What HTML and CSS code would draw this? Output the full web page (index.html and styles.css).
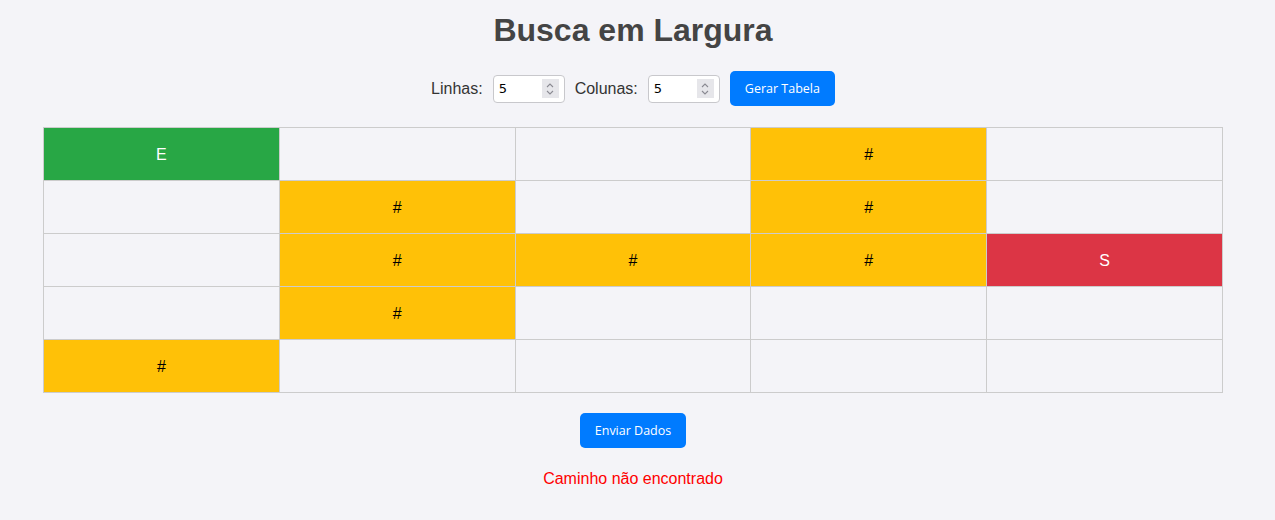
FILE: index.html
```html
<!DOCTYPE html>
<html lang="pt">
<head>
<meta charset="utf-8">
<title>Busca em Largura</title>
<link rel="stylesheet" href="styles.css">
</head>
<body>
<div class="page">
  <h1 class="title">Busca em Largura</h1>
  <div class="controls">
    <label class="lbl">Linhas:</label>
    <div class="numbox">
      <input class="num" type="text" value="5">
      <span class="spin"><svg width="10" height="14" viewBox="0 0 10 14"><path d="M2 5 L5 2 L8 5 M2 9 L5 12 L8 9" fill="none" stroke="#8a8a92" stroke-width="1.1"/></svg></span>
    </div>
    <label class="lbl">Colunas:</label>
    <div class="numbox">
      <input class="num" type="text" value="5">
      <span class="spin"><svg width="10" height="14" viewBox="0 0 10 14"><path d="M2 5 L5 2 L8 5 M2 9 L5 12 L8 9" fill="none" stroke="#8a8a92" stroke-width="1.1"/></svg></span>
    </div>
    <button class="btn">Gerar Tabela</button>
  </div>
  <table class="grid">
    <tr><td class="start">E</td><td></td><td></td><td class="wall">#</td><td></td></tr>
    <tr><td></td><td class="wall">#</td><td></td><td class="wall">#</td><td></td></tr>
    <tr><td></td><td class="wall">#</td><td class="wall">#</td><td class="wall">#</td><td class="end">S</td></tr>
    <tr><td></td><td class="wall">#</td><td></td><td></td><td></td></tr>
    <tr><td class="wall">#</td><td></td><td></td><td></td><td></td></tr>
  </table>
  <div class="actions"><button class="btn">Enviar Dados</button></div>
  <p class="msg">Caminho não encontrado</p>
</div>
</body>
</html>
```
FILE: styles.css
```css
html, body { margin: 0; padding: 0; }
body {
  background: #f4f4f8;
  font-family: "Liberation Sans", Arial, sans-serif;
  color: #333;
}
.page {
  width: 1266px;
  display: flex;
  flex-direction: column;
  align-items: center;
}
.title {
  margin: 12px 0 0;
  font-size: 32px;
  line-height: 37px;
  color: #444;
  font-weight: bold;
}
.controls {
  margin-top: 22px;
  display: flex;
  align-items: center;
  gap: 10px;
  height: 35px;
}
.lbl { font-size: 16px; color: #333; }
.numbox {
  width: 72px;
  height: 28px;
  box-sizing: border-box;
  border: 1px solid #c8c8cc;
  border-radius: 4px;
  background: #fff;
  display: flex;
  align-items: center;
  padding: 0 5px 0 5px;
}
.num {
  flex: 1;
  min-width: 0;
  border: none;
  outline: none;
  background: transparent;
  padding: 0;
  font-size: 13px;
  font-family: "DejaVu Sans", sans-serif;
  color: #000;
}
.spin {
  width: 17px;
  height: 19px;
  background: #e6e6ea;
  display: flex;
  align-items: center;
  justify-content: center;
}
.btn {
  background: #007bff;
  color: #fff;
  border: none;
  border-radius: 5px;
  height: 35px;
  padding: 0 15px;
  font-family: "Open Sans", sans-serif;
  font-size: 12.5px;
  font-weight: 500;
  cursor: pointer;
}
.grid {
  margin-top: 21px;
  width: 1180px;
  border-collapse: collapse;
  table-layout: fixed;
}
.grid td {
  height: 50px;
  border: 1px solid #ccc;
  text-align: center;
  font-size: 16px;
  color: #000;
  padding: 2px 0 0;
}
.grid td.start { background: #28a745; color: #fff; }
.grid td.wall { background: #ffc107; }
.grid td.end { background: #dc3545; color: #fff; }
.actions { margin-top: 20px; }
.msg {
  margin: 22px 0 0;
  color: #ff0000;
  font-size: 16px;
}
```
